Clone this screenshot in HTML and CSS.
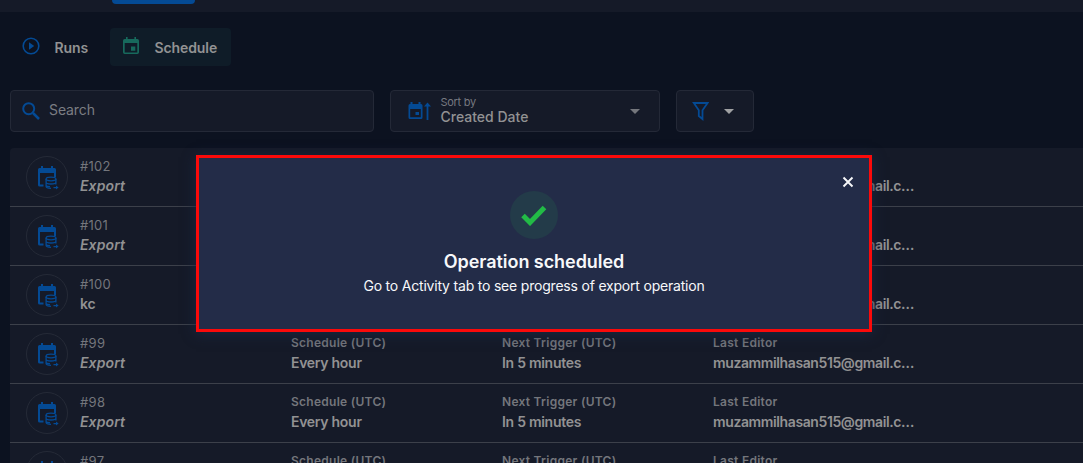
FILE: index.html
```html
<!DOCTYPE html>
<html lang="en">
<head>
<meta charset="utf-8">
<title>Schedule</title>
<link rel="stylesheet" href="styles.css">
</head>
<body>
<svg class="defs" width="0" height="0" aria-hidden="true">
  <symbol id="job" viewBox="0 0 24 28">
    <path fill="currentColor" d="M3.500 4H5V2h2v2h8V2h2v2h1.500A1.500 1.500 0 0 1 20 5.500V13h-2V9H4v11.500h3.500v2h-4A1.500 1.500 0 0 1 2 21V5.500A1.500 1.500 0 0 1 3.500 4z"/>
    <g fill="none" stroke="currentColor" stroke-width="1.300">
      <ellipse cx="15" cy="15" rx="4.900" ry="1.800"/>
      <path d="M10.100 15v7.500c0 1.100 2 1.800 4.900 1.900M19.900 15v5.500M10.100 18.200c0 1 2.200 1.800 4.900 1.800s4.900-.8 4.900-1.800M10.100 21.200c0 .8 1.600 1.300 3.900 1.500M17.500 23.600H21"/>
    </g>
    <path fill="currentColor" d="M20 21.600 22.600 23.600 20 25.600z"/>
  </symbol>
</svg>
<header class="topbar"><div class="topbar-active"></div></header>
<main class="page">
  <nav class="tabs">
    <a class="tab"><svg class="tab-icon" viewBox="0 0 18 18"><circle cx="9" cy="9" r="7.800" fill="none" stroke="currentColor" stroke-width="1.600"/><path d="M7 5.200v7.600L12.200 9z" fill="currentColor"/></svg><span>Runs</span></a>
    <a class="tab tab-on"><svg class="tab-icon" viewBox="0 0 18 18"><path fill="currentColor" fill-rule="evenodd" d="M4 0h1.600v2h6.800V0H14v2h1.300A1.700 1.700 0 0 1 17 3.700v11.600a1.700 1.700 0 0 1-1.700 1.700H2.700A1.700 1.700 0 0 1 1 15.300V3.700A1.700 1.700 0 0 1 2.700 2H4zM2.700 6v9.400h12.600V6zM9 9.500h4.300v4.300H9z"/></svg><span>Schedule</span></a>
  </nav>
  <div class="filters">
    <div class="box search"><svg width="18" height="18" viewBox="0 0 18 18" fill="none" stroke="currentColor"><circle cx="6.700" cy="6.700" r="5.500" stroke-width="2"/><path d="m11 11 6 6" stroke-width="2.500"/></svg><span>Search</span></div>
    <div class="box sort">
      <svg width="23" height="18" viewBox="0 0 23 18" fill="currentColor"><path fill-rule="evenodd" d="M2.500 0h2v2h6V0h2v2H13a1.500 1.500 0 0 1 1.500 1.500v12A1.500 1.500 0 0 1 13 17H2a1.500 1.500 0 0 1-1.500-1.500v-12A1.500 1.500 0 0 1 2 2h.5zM2.200 7v8.300h10.600V7zM7.500 10H11v3H7.500z"/><path d="M19.500 0.500 23 4.500h-2.600V18h-1.800V4.500H16z"/></svg>
      <div class="sort-text"><small>Sort by</small><span>Created Date</span></div>
      <i class="caret"></i>
    </div>
    <div class="box funnel"><svg width="17" height="19" viewBox="0 0 17 19" fill="none" stroke="currentColor" stroke-width="1.800"><path d="M1.800 1h13.800L10.500 8.300V17L6.800 14V8.300z"/></svg><i class="caret caret-light"></i></div>
  </div>
  <section class="list">
    <article class="row"><div class="job"><span class="badge"><svg><use href="#job"/></svg></span><div class="cell"><span class="num">#102</span><em class="name">Export</em></div></div><div class="cell"><span class="label">Schedule (UTC)</span><b class="value">Every hour</b></div><div class="cell"><span class="label">Next Trigger (UTC)</span><b class="value">In 5 minutes</b></div><div class="cell"><span class="label">Last Editor</span><b class="value mail">muzammilhasan515@gmail.c…</b></div></article>
    <article class="row"><div class="job"><span class="badge"><svg><use href="#job"/></svg></span><div class="cell"><span class="num">#101</span><em class="name">Export</em></div></div><div class="cell"><span class="label">Schedule (UTC)</span><b class="value">Every hour</b></div><div class="cell"><span class="label">Next Trigger (UTC)</span><b class="value">In 5 minutes</b></div><div class="cell"><span class="label">Last Editor</span><b class="value mail">muzammilhasan515@gmail.c…</b></div></article>
    <article class="row"><div class="job"><span class="badge"><svg><use href="#job"/></svg></span><div class="cell"><span class="num">#100</span><b class="value">kc</b></div></div><div class="cell"><span class="label">Schedule (UTC)</span><b class="value">Every hour</b></div><div class="cell"><span class="label">Next Trigger (UTC)</span><b class="value">In 5 minutes</b></div><div class="cell"><span class="label">Last Editor</span><b class="value mail">muzammilhasan515@gmail.c…</b></div></article>
    <article class="row"><div class="job"><span class="badge"><svg><use href="#job"/></svg></span><div class="cell"><span class="num">#99</span><em class="name">Export</em></div></div><div class="cell"><span class="label">Schedule (UTC)</span><b class="value">Every hour</b></div><div class="cell"><span class="label">Next Trigger (UTC)</span><b class="value">In 5 minutes</b></div><div class="cell"><span class="label">Last Editor</span><b class="value mail">muzammilhasan515@gmail.c…</b></div></article>
    <article class="row"><div class="job"><span class="badge"><svg><use href="#job"/></svg></span><div class="cell"><span class="num">#98</span><em class="name">Export</em></div></div><div class="cell"><span class="label">Schedule (UTC)</span><b class="value">Every hour</b></div><div class="cell"><span class="label">Next Trigger (UTC)</span><b class="value">In 5 minutes</b></div><div class="cell"><span class="label">Last Editor</span><b class="value mail">muzammilhasan515@gmail.c…</b></div></article>
    <article class="row"><div class="job"><span class="badge"><svg><use href="#job"/></svg></span><div class="cell"><span class="num">#97</span></div></div><div class="cell"><span class="label">Schedule (UTC)</span></div><div class="cell"><span class="label">Next Trigger (UTC)</span></div><div class="cell"><span class="label">Last Editor</span></div></article>
  </section>
</main>
<div class="dialog" role="dialog">
  <svg class="close" viewBox="0 0 12 12"><path d="m1.500 1.500 9 9m0-9-9 9" stroke="currentColor" stroke-width="1.900"/></svg>
  <div class="success"><svg width="26" height="22" viewBox="0 0 26 22"><path d="M2 11.500 9 18.500 23.500 3.500" fill="none" stroke="#22bb46" stroke-width="5"/></svg></div>
  <h1 class="title">Operation scheduled</h1>
  <p class="message">Go to Activity tab to see progress of export operation</p>
</div>
</body>
</html>
```
FILE: styles.css
```css
* { box-sizing: border-box; }
body { margin: 0; width: 1083px; height: 463px; overflow: hidden; position: relative; background: #0c1220; color: #929293; font-family: Inter, "Liberation Sans", sans-serif; font-size: 14px; }
.defs { position: absolute; }
.topbar { height: 12px; background: #151a28; padding-left: 112px; }
.topbar-active { width: 83px; height: 4px; border-radius: 0 0 4px 4px; background: #044a94; }
.page { height: 451px; overflow: hidden; padding: 16px 0 0 10px; }
.tabs { display: flex; height: 38px; }
.tab { display: flex; align-items: center; gap: 14.500px; padding: 1px 12px 0; width: 100px; font-weight: 600; letter-spacing: -0.1px; border-radius: 4px; }
.tab-icon { width: 18px; height: 18px; flex: none; color: #044a94; margin-top: -3px; }
.tab-on { width: 121px; background: #0f1c28; }
.tab-on .tab-icon { color: #17695c; }
.filters { display: flex; gap: 16px; margin-top: 24px; }
.box { display: flex; align-items: center; height: 42px; border: 1px solid #242937; border-radius: 4px; background: #151a28; }
.box svg { color: #044a94; flex: none; }
.search { width: 364px; padding: 0 11px; gap: 9px; color: #7b7d83; letter-spacing: -0.1px; }
.search span { padding-bottom: 3px; }
.sort { width: 270px; padding: 0 19px 0 17px; }
.sort-text { display: flex; flex-direction: column; flex: 1; margin-left: 9.500px; padding-bottom: 1px; }
.sort-text small { font-size: 11px; line-height: 13px; color: #777980; letter-spacing: -0.3px; }
.sort-text span { line-height: 16px; letter-spacing: 0; font-weight: 500; }
.caret { border: 5px solid transparent; border-top-color: #74767c; border-bottom: 0; }
.caret-light { border-top-color: #a0a1a3; }
.funnel { width: 78px; padding: 0 19px 0 15px; justify-content: space-between; }
.list { margin-top: 16px; background: #151a28; border-radius: 4px 0 0; }
.row { display: grid; grid-template-columns: 281px 211px 211px 1fr; height: 59px; border-bottom: 1px solid #3c404a; }
.job { display: flex; padding-left: 16px; }
.badge { width: 42px; height: 42px; margin: 8px 12px 0 0; border: 1px solid #252a37; border-radius: 50%; display: flex; align-items: center; justify-content: center; color: #044a94; }
.badge svg { width: 24px; height: 28px; flex: none; margin: 2px 0 0 2px; }
.cell { display: flex; flex-direction: column; padding-top: 9px; white-space: nowrap; }
.num, .label { font-size: 12px; line-height: 18px; color: #74767c; }
.num { font-size: 13px; letter-spacing: 0.3px; }
.label { font-weight: 600; letter-spacing: 0.27px; }
.name, .value { line-height: 22px; font-weight: 600; letter-spacing: -0.28px; }
.name { letter-spacing: 0.1px; }
.mail { letter-spacing: -0.39px; }
.dialog { position: absolute; left: 196px; top: 155px; width: 676px; height: 177px; border: 3px solid #fb0a0a; background: #232c48; color: #f7f8fa; display: flex; flex-direction: column; align-items: center; padding-top: 33px; box-shadow: 0 2px 12px 0 #1a2740; }
.close { position: absolute; right: 15px; top: 17.500px; width: 12px; height: 12px; }
.success { width: 48px; height: 48px; border-radius: 50%; background: #233b49; display: flex; align-items: center; justify-content: center; }
.title { margin: 10px 0 0; font-size: 18px; line-height: 25px; font-weight: 600; letter-spacing: -0.05px; }
.message { margin: 2px 0 0; font-size: 14px; line-height: 20px; letter-spacing: -0.2px; }
```
